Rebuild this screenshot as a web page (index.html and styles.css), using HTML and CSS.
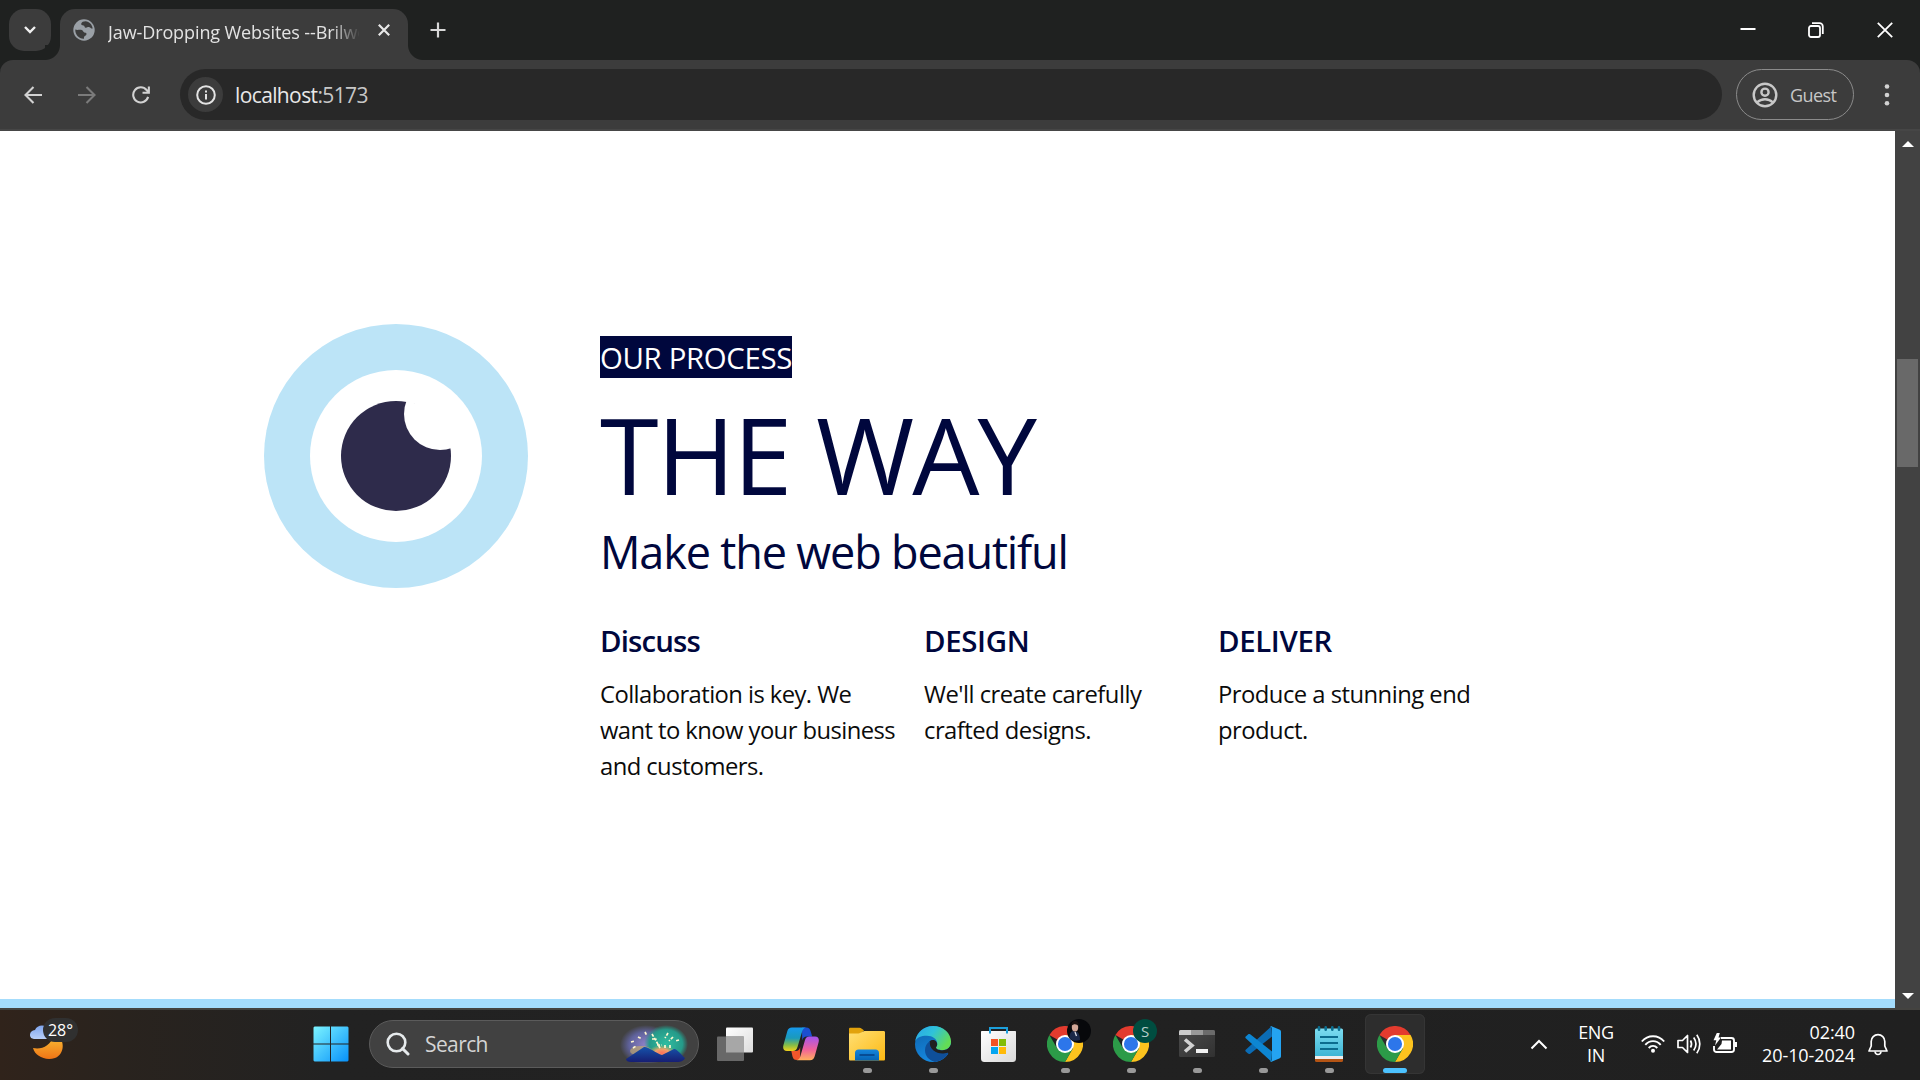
FILE: index.html
```html
<!DOCTYPE html>
<html lang="en">
<head>
<meta charset="utf-8">
<title>Jaw-Dropping Websites</title>
<link rel="stylesheet" href="styles.css">
</head>
<body>
<svg class="defs" width="0" height="0" aria-hidden="true">
  <defs>
    <symbol id="chrome" viewBox="0 0 48 48">
      <path fill="#e33b2e" d="M24 24 3.2 12A24 24 0 0 1 44.8 12H24z"/>
      <path fill="#fcc31e" d="M24 24V12h20.8A24 24 0 0 1 24 48l10.4-18z"/>
      <path fill="#2c9b48" d="M24 24l10.4 6L24 48A24 24 0 0 1 3.2 12l10.4 18z"/>
      <circle cx="24" cy="24" r="12" fill="#fff"/>
      <circle cx="24" cy="24" r="9.4" fill="#2d76ea"/>
    </symbol>
  </defs>
</svg>

<header class="tabstrip">
  <button class="tab-search"><svg width="14" height="10" viewBox="0 0 14 10"><path d="M2 2l5 5 5-5" fill="none" stroke="#f0f0f0" stroke-width="2.4"/></svg></button>
  <div class="tab">
    <svg class="favicon" width="22" height="22" viewBox="0 0 22 22"><circle cx="11" cy="11" r="10.7" fill="#9aa0a6"/><path d="M12.500 2.200c-2 0-4 .7-4.300 2.600-.2 1.500 1 1.500 2.200 1.600 1.500.2.800 1.800 2 2.300 1.600.5 2.100-1 4-.5 1.200.4 1.500 1.500 3.300 1.300C19 5.500 16.500 2.500 12.500 2.200zM2.300 10.500c2 1 4.500-.2 6.500.6 1.500.6 1 1.800 2.500 2.300 1.200.4 2.300-.2 2.200 1.600-.1 1.600-1.500 1.500-2.200 2.500-.5.700-.3 1.600-.3 2.200-5 .3-9-4-8.700-9.200z" fill="#3c3c3c"/></svg>
    <span class="tab-title">Jaw-Dropping Websites --Brilwo</span>
    <svg class="tab-close" width="12" height="12" viewBox="0 0 12 12"><path d="M.8.8l10.400 10.400M11.200.8L.8 11.200" stroke="#e8e8e8" stroke-width="2.200"/></svg>
  </div>
  <button class="new-tab"><svg width="16" height="16" viewBox="0 0 16 16"><path d="M8 .5v15M.5 8h15" stroke="#d8d8d8" stroke-width="2.200"/></svg></button>
  <div class="window-controls">
    <span><svg width="16" height="16" viewBox="0 0 16 16"><path d="M.5 7h15" stroke="#fff" stroke-width="2"/></svg></span>
    <span><svg width="16" height="16" viewBox="0 0 16 16" fill="none" stroke="#fff" stroke-width="1.800"><rect x="1" y="4" width="11" height="11" rx="2"/><path d="M4 1.200h7.500a3.300 3.300 0 0 1 3.300 3.300V12"/></svg></span>
    <span><svg width="16" height="16" viewBox="0 0 16 16"><path d="M.8.8l14.400 14.400M15.200.8L.8 15.200" stroke="#fff" stroke-width="1.800"/></svg></span>
  </div>
</header>

<nav class="toolbar">
  <svg class="nav-icon" width="18" height="18" viewBox="0 0 18 18" fill="none" stroke="#d2d2d2" stroke-width="2.100"><path d="M18 9H1.600M9.500 1L1.500 9l8 8"/></svg>
  <svg class="nav-icon" width="18" height="18" viewBox="0 0 18 18" fill="none" stroke="#7b7b7b" stroke-width="2.100"><path d="M0 9h16.400M8.500 1l8 8-8 8"/></svg>
  <svg class="nav-icon" width="18" height="18" viewBox="0 0 19 19" fill="none" stroke="#d2d2d2" stroke-width="2.200"><path d="M17 11.500A8 8 0 1 1 15.400 4.200L17.500 6.500M17.800.5v6.700h-6.700"/></svg>
  <div class="omnibox">
    <span class="site-info"><svg width="20" height="20" viewBox="0 0 20 20"><circle cx="10" cy="10" r="8.800" fill="none" stroke="#e3e3e3" stroke-width="2"/><path d="M10 9v5.500M10 5.500v2" stroke="#e3e3e3" stroke-width="2"/></svg></span>
    <span class="url"><b>localhost</b>:5173</span>
  </div>
  <div class="profile">
    <svg width="26" height="26" viewBox="0 0 26 26" fill="none" stroke="#c8c8c8" stroke-width="2.400"><circle cx="13" cy="13" r="11.300"/><circle cx="13" cy="10.200" r="3.600"/><path d="M5 20.500c4.500-4.300 11.500-4.300 16 0"/></svg>
    <span class="guest">Guest</span>
  </div>
  <svg class="menu-dots" width="6" height="22" viewBox="0 0 6 22" fill="#d2d2d2"><circle cx="3" cy="2.500" r="2.300"/><circle cx="3" cy="11" r="2.300"/><circle cx="3" cy="19.300" r="2.300"/></svg>
</nav>

<div class="viewport">
  <main class="page">
    <section class="process">
      <svg class="eye" width="264" height="264" viewBox="0 0 264 264">
        <defs><clipPath id="pupil"><circle cx="132" cy="132" r="56"/></clipPath></defs>
        <circle cx="132" cy="132" r="132" fill="#bce4f7"/>
        <circle cx="132" cy="132" r="86" fill="#fff"/>
        <circle cx="132" cy="132" r="55" fill="#2e2b4b"/>
        <circle cx="176" cy="90" r="36" fill="#fff" clip-path="url(#pupil)"/>
      </svg>
      <div class="copy">
        <div class="eyebrow"><span>OUR PROCESS</span></div>
        <h1>THE WAY</h1>
        <h2>Make the web beautiful</h2>
        <div class="steps">
          <article><h3 class="lower">Discuss</h3><p class="tight">Collaboration is key. We<br>want to know your business<br>and customers.</p></article>
          <article><h3>DESIGN</h3><p>We'll create carefully<br>crafted designs.</p></article>
          <article><h3>DELIVER</h3><p>Produce a stunning end<br>product.</p></article>
        </div>
      </div>
    </section>
    <div class="band"></div>
  </main>
  <aside class="scrollbar">
    <svg width="12" height="6" viewBox="0 0 12 6"><path d="M6 0l6 6H0z" fill="#fff"/></svg>
    <div class="track"><div class="thumb"></div></div>
    <svg width="12" height="6" viewBox="0 0 12 6"><path d="M6 6l6-6H0z" fill="#fff"/></svg>
  </aside>
</div>

<footer class="taskbar">
  <div class="weather">
    <svg width="34" height="34" viewBox="0 0 34 34">
      <defs><linearGradient id="moon" x2="0" y2="1"><stop offset="0" stop-color="#f9bd35"/><stop offset="1" stop-color="#ef7415"/></linearGradient><linearGradient id="cloud" x2="0" y2="1"><stop offset="0" stop-color="#7fa5ee"/><stop offset="1" stop-color="#b8cff8"/></linearGradient></defs>
      <path d="M3 23c8 2 18-2 20-12l7 2c5 6 3 17-5 20C15 36 5 31 3 23z" fill="url(#moon)"/>
      <path d="M4 14C-2 14-1 5 5 5 7-1 17-1 19 5v9z" fill="url(#cloud)"/>
    </svg>
    <span class="temp">28°</span>
  </div>

  <div class="apps">
    <span class="start"><svg width="36" height="36" viewBox="0 0 36 36"><defs><linearGradient id="win" x2="1" y2="1"><stop offset="0" stop-color="#7cf4ff"/><stop offset="1" stop-color="#0791fa"/></linearGradient></defs><path fill="url(#win)" d="M1.500.5H17v17H.5v-16zM18 .5h16.500l1 1v16H18zM.5 18.500H17v17H1.500l-1-1zM18 18.500h17.500v16l-1 1H18z"/></svg></span>
    <div class="search">
      <svg width="24" height="24" viewBox="0 0 24 24" fill="none" stroke="#e6eaec" stroke-width="2.600"><circle cx="10.500" cy="10.500" r="8.800"/><path d="M16.500 16.500l5.500 5.500" stroke-linecap="round" stroke-width="3"/></svg>
      <span class="search-label">Search</span>
      <svg class="fireworks" width="70" height="38" viewBox="0 0 70 38">
        <defs>
          <radialGradient id="fw1"><stop offset="0" stop-color="#9183c9"/><stop offset=".65" stop-color="#5f629b"/><stop offset="1" stop-color="#5f629b" stop-opacity="0"/></radialGradient>
          <radialGradient id="fw2"><stop offset="0" stop-color="#30bda0"/><stop offset=".75" stop-color="#259a89"/><stop offset="1" stop-color="#259a89" stop-opacity="0"/></radialGradient>
          <radialGradient id="fw3"><stop offset="0" stop-color="#ff7158"/><stop offset=".5" stop-color="#eea16b"/><stop offset="1" stop-color="#c5b65a" stop-opacity="0"/></radialGradient>
          <linearGradient id="hill" x2="0" y2="1"><stop offset="0" stop-color="#1653ab"/><stop offset="1" stop-color="#171e73"/></linearGradient>
        </defs>
        <ellipse cx="27" cy="20" rx="26" ry="20" fill="url(#fw1)"/><ellipse cx="47" cy="19" rx="22" ry="19" fill="url(#fw2)"/><ellipse cx="43" cy="28" rx="14" ry="8" fill="url(#fw3)"/><ellipse cx="22" cy="26" rx="11" ry="5" fill="#cbb066" opacity=".6"/>
        <path d="M7 34l18-12c3-1 12 6 18 8l12-6c2-1 8 6 11 9-1 3-5 4-7 4H12c-3 0-5-1-5-3z" fill="url(#hill)"/>
        <path d="M12 17l4-1M19 12l4 2M26 7l2 4M33 9l3 5 5 9M49 8l-3 5M54 12l-4 4M60 15l-4 1M14 23l3-2M38 20h5M46 20v3M51 20v3M33 14h5" fill="none" stroke="#fff7cf" stroke-width="1.700" stroke-dasharray="3 1.500"/>
      </svg>
    </div>

    <span class="app"><svg width="36" height="36" viewBox="0 0 36 36"><defs><linearGradient id="tv" x2="1" y2="1"><stop offset="0" stop-color="#fff"/><stop offset="1" stop-color="#dcdcdc"/></linearGradient></defs><rect x="9" y="1.500" width="27" height="25" rx="1" fill="url(#tv)"/><rect y="10.500" width="27" height="24.500" rx="1" fill="#686868"/><path d="M9 10.500h18v16H9z" fill="#a7a7a7"/></svg></span>
    <span class="app"><svg width="36" height="36" viewBox="0 0 36 36">
      <defs>
        <linearGradient id="cp1" x2="0" y2="1"><stop offset="0" stop-color="#1699ed"/><stop offset=".45" stop-color="#1a9abb"/><stop offset=".75" stop-color="#86bd47"/><stop offset="1" stop-color="#f3d21a"/></linearGradient>
        <linearGradient id="cp2" x2="0" y2="1"><stop offset="0" stop-color="#a454ee"/><stop offset=".55" stop-color="#f0629a"/><stop offset="1" stop-color="#ffb05d"/></linearGradient>
      </defs>
      <path d="M19 1.500h4c3 0 4 1.500 4.700 4l1.500 5h-5c-3 0-4.200 1-5 4z" fill="#1b4fd0"/>
      <path d="M17 34h-3c-2.800 0-3.800-1.300-4.500-3.600L8.300 25h4.200c3 0 4-1.500 4.700-4z" fill="#f2562b"/>
      <path d="M9 1.500h14c-2.200.4-3.300 2-4 4.500l-4.500 15c-.8 2.700-2 4-4.700 4H4c-3.300 0-4.400-2.500-3.600-5.800L4.300 5.300C5.100 2.700 6.400 1.500 9 1.500z" fill="url(#cp1)"/>
      <path d="M27 34.200H13.500c2.200-.4 3.400-2 4-4.500l4.300-15c.8-2.800 2-4.200 4.700-4.200H32c3.300 0 4.400 2.500 3.600 5.800l-3.900 14c-.8 2.700-2.100 3.900-4.700 3.900z" fill="url(#cp2)"/>
    </svg></span>
    <span class="app running"><svg width="36" height="36" viewBox="0 0 36 36"><defs><linearGradient id="fold" x2="1" y2="1"><stop offset="0" stop-color="#ffdf74"/><stop offset="1" stop-color="#fdb913"/></linearGradient><linearGradient id="fblue" x2="0" y2="1"><stop offset="0" stop-color="#1686dc"/><stop offset="1" stop-color="#0664b4"/></linearGradient></defs><path d="M0 3c0-1 .5-1.300 1.500-1.300h9c1.500 0 3 1.500 4.500 2.800L10 9H0z" fill="#e2a20c"/><path d="M0 7.500h9.500c2 0 4-2.500 6-2.500H34.500c1 0 1.500.5 1.500 1.500V33c0 1-.5 1.500-1.500 1.500h-33C.5 34.500 0 34 0 33z" fill="url(#fold)"/><path d="M6 34.500V27c0-2.300 1.300-3.600 3.500-3.600h17c2.200 0 3.500 1.300 3.500 3.600v7.500z" fill="url(#fblue)"/><path d="M10.500 29h15" stroke="#07488e" stroke-width="1.800"/></svg></span>
    <span class="app running"><svg width="36" height="36" viewBox="0 0 36 36">
      <defs><linearGradient id="ed1" x2="1" y2=".5"><stop offset="0" stop-color="#2aa5e8"/><stop offset=".5" stop-color="#2fc2da"/><stop offset="1" stop-color="#63dc55"/></linearGradient><linearGradient id="ed2" x2=".4" y2="1"><stop offset="0" stop-color="#0d61aa"/><stop offset="1" stop-color="#1689e0"/></linearGradient></defs>
      <circle cx="18" cy="18" r="18" fill="url(#ed2)"/>
      <path d="M36 18v9l-3 1-1-3z" fill="#212121"/>
      <path d="M.3 15C1.700 6.500 9 0 18 0c10.500 0 18 7.500 18 15.500 0 5.500-4 8.700-8.500 8.700-5 0-6.800-1.700-6.500-2.700.3-.8 1.300-1.500 1.300-3.700 0-5-5-8-10.300-8C6.500 9.700 2 11.500.3 15z" fill="url(#ed1)"/>
      <path d="M14.200 16c1.500-2.500 5-2.600 7-.6 1.500 2 1.200 4-.2 6 0 1.500 2.500 2.800 6.500 2.800 2 0 5.500-1 8-4-.2 2.400-1.300 4.700-2.500 6.500-5 2.500-11 1.500-14.500-1.500-3-2.500-4.700-6-4.300-9.200z" fill="#202020"/>
      <path d="M15 15c-3 2-5 5-5 9 0 6 4 10.500 10 11.900 5-.6 9.500-3 13-7.900.5-1-.1-1.500-1-1.100-5 1.400-10 .6-13.500-2.400-3-2.500-4.300-6-3.500-9.500z" fill="#0f4f99"/>
    </svg></span>
    <span class="app"><svg width="36" height="36" viewBox="0 0 36 36"><defs><linearGradient id="st" x2="1" y2="1"><stop offset="0" stop-color="#fff"/><stop offset="1" stop-color="#d9d9d9"/></linearGradient></defs><path d="M0 6c0-.7.300-1 1-1h33c.7 0 1 .3 1 1v26c0 3-1 4-4 4H4c-3 0-4-1-4-4z" fill="url(#st)"/><path d="M9 7.500V2h17v5.500" fill="none" stroke="#1c9fdb" stroke-width="2"/><path d="M10 13h7v7h-7z" fill="#f35325"/><path d="M18 13h7v7h-7z" fill="#81bc06"/><path d="M10 21h7v7h-7z" fill="#05a6f0"/><path d="M18 21h7v7h-7z" fill="#ffba08"/></svg></span>
    <span class="app running"><svg width="36" height="36"><use href="#chrome"/></svg>
      <svg class="badge" width="24" height="24" viewBox="0 0 24 24"><circle cx="12" cy="12" r="12" fill="#07080b"/><path d="M2.500 19c0-5 1.500-7 4-7l4 1c2 2 2.500 5 2.500 8-4 1.500-8 1-10.500-2z" fill="#1a2848"/><ellipse cx="8" cy="8" rx="3.200" ry="4.600" fill="#d3a797"/><path d="M4.300 7C4 2.500 7 1.500 9 2c2.500.5 3 3 2.500 5.500C10 5 7 4.500 4.300 7z" fill="#1a1211"/><path d="M8 13l1.500 4" stroke="#dce0e9" stroke-width="1.300"/></svg></span>
    <span class="app running"><svg width="36" height="36"><use href="#chrome"/></svg><span class="badge initial">S</span></span>
    <span class="app running"><svg width="36" height="36" viewBox="0 0 36 36"><defs><linearGradient id="term" x2="1" y2="1"><stop offset="0" stop-color="#4b4b4b"/><stop offset="1" stop-color="#313131"/></linearGradient></defs><rect y="4" width="36" height="27" rx="1.500" fill="url(#term)"/><path d="M0 9V5.500Q0 4 1.500 4H12v5z" fill="#ccc"/><path d="M12 4h12v5H12z" fill="#999"/><path d="M24 4h10.500Q36 4 36 5.500V9H24z" fill="#6b6b6b"/><path d="M6 13.500l7 6-7 6" fill="none" stroke="#d2d2d2" stroke-width="3.600"/><path d="M17 23h12v4H17z" fill="#f1f1f1"/></svg></span>
    <span class="app running"><svg width="36" height="36" viewBox="0 0 36 36"><path d="M26.500.3 1 23.500c-.9.8-.9 1.500 0 2.300l2 1.800c.7.600 1.400.6 2.200.1L27 10.500z" fill="#0b6cb5"/><path d="M26.500 35.700 1 12.500c-.9-.8-.9-1.500 0-2.300l2-1.800c.7-.6 1.400-.6 2.200-.1L27 25.500z" fill="#0d86d2"/><path d="M26.500.2 34.800 3.800c.8.400 1.200 1 1.200 1.900v24.600c0 .9-.4 1.500-1.200 1.900l-8.300 3.600c-1 .2-1.500-.2-2-.8 1 .7 2.500 0 2.500-1.500V2.500c0-1.500-1.500-2.200-2.500-1.500.5-.6 1-1 2-.8z" fill="#24a4f2"/></svg></span>
    <span class="app running"><svg width="36" height="36" viewBox="0 0 36 36"><defs><linearGradient id="np" x2="0" y2="1"><stop offset="0" stop-color="#7cdcf0"/><stop offset="1" stop-color="#3eb6d5"/></linearGradient></defs><path d="M4 31h28v3.500q0 1.500-1.500 1.500h-25Q4 36 4 34.500z" fill="#b45414"/><path d="M4 29h28v4H4z" fill="#eee"/><path d="M4 4q0-1.500 1.500-1.500h25Q32 2.500 32 4v26H4z" fill="url(#np)"/><path d="M9 11h18M9 17h18M9 23h18" stroke="#0b6c8e" stroke-width="2"/><path d="M8 1.300v2.500M14.700 1.300v2.500M21.300 1.300v2.500M28 1.300v2.500" stroke="#0b6f91" stroke-width="2.600" stroke-linecap="round"/></svg></span>
    <span class="app running active"><svg width="36" height="36"><use href="#chrome"/></svg></span>
  </div>

  <div class="tray">
    <svg class="chevron" width="18" height="11" viewBox="0 0 18 11"><path d="M1.500 9.500L9 2l7.500 7.500" fill="none" stroke="#fff" stroke-width="2"/></svg>
    <div class="lang"><span>ENG</span><span>IN</span></div>
    <div class="status">
      <svg width="24" height="20" viewBox="0 0 24 20" fill="none" stroke="#fff" stroke-width="1.900"><path d="M.8 7.500c6-7 16.400-7 22.400 0M4.300 10.800c4.300-4.900 11.100-4.900 15.400 0M7.700 14c2.500-2.800 6.100-2.800 8.600 0"/><circle cx="12" cy="16.700" r="2" fill="#fff" stroke="none"/></svg>
      <svg width="24" height="22" viewBox="0 0 24 22" fill="none" stroke="#fff" stroke-width="1.700"><path d="M1 7.500h4.500l5-5v17l-5-5H1z" stroke-linejoin="round"/><path d="M13.500 7.500c1.300 2.200 1.300 4.800 0 7M16.700 4.500c2.800 4 2.800 9 0 13M19.800 1.800c4 5.600 4 12.800 0 18.400"/></svg>
      <svg width="24" height="22" viewBox="0 0 24 22"><path d="M8 5h10.500c1.500 0 2.500 1 2.500 2.500v9c0 1.500-1 2.500-2.500 2.500h-15C2 19 1 18 1 16.500V13" fill="none" stroke="#fff" stroke-width="1.900"/><path d="M9 7.500h9v9H4L8.500 11z" fill="#fff"/><path d="M21.500 9H24v5h-2.500zM3.800 0h3L5.500 4.500H8L2 12.500l1.300-5.300H.5z" fill="#fff"/></svg>
    </div>
    <div class="clock"><span>02:40</span><span>20-10-2024</span></div>
    <svg class="bell" width="20" height="23" viewBox="0 0 20 23" fill="none" stroke="#fff" stroke-width="1.700"><path d="M3.200 13V8.500a6.800 6.800 0 0 1 13.600 0V13l2.200 5H1z" stroke-linejoin="round"/><path d="M7 18.500c.5 4 5.500 4 6 0"/></svg>
  </div>
</footer>
</body>
</html>
```
FILE: styles.css
```css
* { box-sizing: border-box; }

body {
  margin: 0;
  width: 1920px;
  height: 1080px;
  overflow: hidden;
  display: flex;
  flex-direction: column;
  font-family: "Open Sans", "Noto Sans", sans-serif;
  background: #1f2120;
}

svg { display: block; flex: none; }
button { border: 0; padding: 0; background: none; }
.defs { position: absolute; }

/* Tab strip */
.tabstrip {
  height: 60px;
  display: flex;
  background: #1f2120;
  flex: none;
}
.tab-search {
  width: 42px;
  height: 42px;
  margin: 9px 9px 0;
  border-radius: 15px;
  background: #3c3c3c;
  display: flex;
  align-items: center;
  justify-content: center;
}
.tab {
  position: relative;
  width: 348px;
  height: 51px;
  margin-top: 9px;
  padding: 0 18px 9px 13px;
  display: flex;
  align-items: center;
  background: #3c3c3c;
  border-radius: 15px 15px 0 0;
}
.tab::before,
.tab::after {
  content: "";
  position: absolute;
  bottom: 0;
  width: 15px;
  height: 15px;
}
.tab::before { left: -15px; background: radial-gradient(circle at 0 0, #1f2120 14.5px, #3c3c3c 15.5px); }
.tab::after { right: -15px; background: radial-gradient(circle at 100% 0, #1f2120 14.5px, #3c3c3c 15.5px); }
.tab-title {
  width: 251px;
  margin: 3px 0 0 13px;
  overflow: hidden;
  white-space: nowrap;
  font-size: 18px;
  line-height: 26px;
  letter-spacing: -0.1px;
  color: #e3e3e3;
  -webkit-mask-image: linear-gradient(90deg, #000 222px, transparent 253px);
  mask-image: linear-gradient(90deg, #000 222px, transparent 253px);
}
.tab-close { margin-left: auto; }
.new-tab { width: 60px; display: flex; align-items: center; justify-content: center; }
.window-controls { margin: 0 1px 0 auto; display: flex; }
.window-controls span { width: 68.5px; display: flex; align-items: center; justify-content: center; }

/* Toolbar */
.toolbar {
  height: 71px;
  padding: 0 30px 0 24px;
  display: flex;
  align-items: center;
  flex: none;
  background: #3c3c3c;
  box-shadow: inset 0 -2px #464646;
  border-radius: 13px 13px 0 0;
}
.nav-icon { margin: 0 36px 2px 0; }
.nav-icon:nth-child(3) { margin-right: 30px; }
.omnibox {
  width: 1542px;
  height: 51px;
  margin-bottom: 2px;
  padding-left: 8px;
  display: flex;
  align-items: center;
  border-radius: 26px;
  background: #282828;
}
.site-info {
  width: 35px;
  height: 35px;
  border-radius: 50%;
  background: #3c3c3c;
  display: flex;
  align-items: center;
  justify-content: center;
}
.url { margin-left: 12px; font-size: 21px; letter-spacing: -0.62px; color: #c7c7c7; }
.url b { font-weight: 400; color: #e8e8e8; }
.profile {
  width: 118px;
  height: 51px;
  margin: 0 0 2px 14px;
  padding-left: 15px;
  display: flex;
  align-items: center;
  gap: 12px;
  border: 1.5px solid #8b8b8b;
  border-radius: 26px;
  font-size: 18px;
  letter-spacing: -0.6px;
  color: #c7c7c7;
}
.menu-dots { margin: 0 0 2px auto; }

/* Page */
.viewport { flex: 1; display: flex; min-height: 0; }
.page { flex: 1; display: flex; flex-direction: column; background: #fff; }
.process {
  flex: 1;
  padding: 193px 0 0 264px;
  display: flex;
  align-items: flex-start;
  color: #00073d;
}
.copy { margin: 12px 0 0 72px; }
.eyebrow { height: 42px; line-height: 44px; font-size: 29.4px; letter-spacing: -0.35px; }
.eyebrow span { display: inline-block; height: 42px; background: #00073d; color: #fff; }
h1, h2, h3, p { margin: 0; font-weight: 400; white-space: nowrap; }
h1 { margin-top: 22px; font-size: 106.4px; line-height: 108px; letter-spacing: -1.95px; }
h2 { margin-top: 14px; font-size: 45px; line-height: 60px; letter-spacing: -1.15px; }
h3 { font-size: 29.4px; line-height: 42px; font-weight: 600; letter-spacing: -0.35px; }
.lower { letter-spacing: -0.85px; }
.steps { margin-top: 38px; display: grid; grid-template-columns: 294px 264px 294px; gap: 30px; }
p { margin-top: 14px; font-size: 23.8px; line-height: 36px; letter-spacing: -0.52px; color: #0b0b0b; }
.tight { letter-spacing: -0.57px; }
.band { height: 9px; background: #a4dcfc; }

.scrollbar {
  width: 25px;
  padding: 10px 0 9px;
  display: flex;
  flex-direction: column;
  align-items: center;
  background: #424242;
}
.track { flex: 1; width: 100%; padding: 212px 2px 0; }
.thumb { height: 108px; background: #696969; }

/* Taskbar */
.taskbar {
  height: 72px;
  padding-bottom: 2px;
  flex: none;
  display: flex;
  border-top: 2px solid #444340;
  background: linear-gradient(90deg, #30231b 0, #29231e 120px, #222 330px, #202020 100%);
  color: #fff;
  font-size: 18px;
}
.weather { position: relative; width: 302px; padding: 15px 0 0 30px; }
.temp {
  position: absolute;
  left: 43px;
  top: 8px;
  width: 35px;
  height: 24px;
  border-radius: 12px;
  background: #303030;
  font-size: 16px;
  line-height: 24px;
  text-align: center;
}
.apps { display: flex; align-items: center; }
.start { width: 67px; padding-left: 11px; }
.search {
  width: 330px;
  height: 48px;
  margin-right: 3px;
  padding-left: 16px;
  display: flex;
  align-items: center;
  border: 1.5px solid #5b5b5b;
  border-radius: 24px;
  background: #414141;
}
.search-label { margin-left: 15px; font-size: 21px; letter-spacing: -0.7px; color: #d4d4d4; }
.search-label { letter-spacing: -0.6px; }
.fireworks { margin: 0 9px 0 auto; }
.app {
  position: relative;
  width: 66px;
  height: 60px;
  display: flex;
  align-items: center;
  justify-content: center;
}
.app.running::after {
  content: "";
  position: absolute;
  bottom: 1px;
  left: 28.5px;
  width: 9px;
  height: 5px;
  border-radius: 3px;
  background: #999;
}
.app.active { width: 60px; margin-left: 3px; border-radius: 6px; background: #2d2d2d; box-shadow: inset 0 0 0 1px #353535; }
.app.active::after { left: 18px; width: 24px; background: #4cc2ff; }
.badge { position: absolute; left: 35px; top: 5px; }
.initial {
  width: 24px;
  height: 24px;
  border-radius: 50%;
  background: #004d40;
  color: #b9cfca;
  font-size: 15px;
  line-height: 24px;
  text-align: center;
}
.tray { margin-left: auto; padding-right: 32px; display: flex; align-items: center; }
.chevron { margin-right: 30px; }
.lang, .clock { display: flex; flex-direction: column; line-height: 23.5px; }
.lang { align-items: center; width: 36px; letter-spacing: -0.3px; }
.status { display: flex; align-items: center; gap: 12px; margin-left: 27px; }
.clock { width: 94px; margin-left: 24px; align-items: flex-end; letter-spacing: -0.1px; }
.bell { margin-left: 13px; }
```
